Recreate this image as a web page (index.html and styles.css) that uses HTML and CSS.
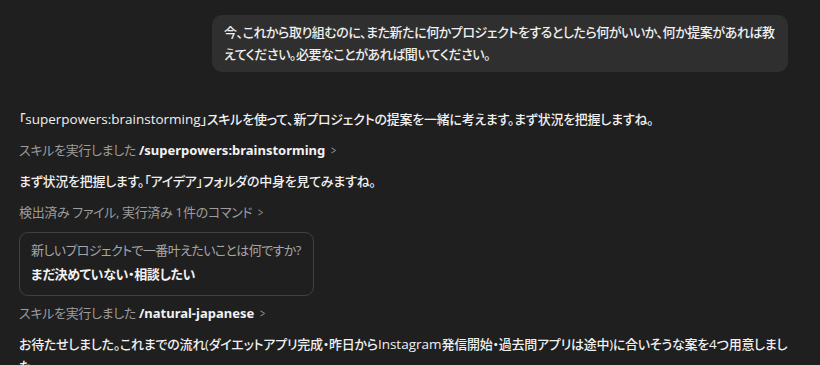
FILE: index.html
```html
<!DOCTYPE html>
<html lang="ja">
<head>
  <meta charset="UTF-8">
  <title>チャット</title>
  <link rel="stylesheet" href="styles.css">
</head>
<body>
  <div class="chat">
    <div class="user-row">
      <div class="bubble">今、これから取り組むのに、また新たに何かプロジェクトをするとしたら何がいいか、何か提案があれば教えてください。必要なことがあれば聞いてください。</div>
    </div>

    <div class="reply">
      <p class="msg">「<span class="en">superpowers:brainstorming</span>」スキルを使って、新プロジェクトの提案を一緒に考えます。まず状況を把握しますね。</p>
      <div class="tool">スキルを実行しました <span class="tool-name">/superpowers:brainstorming</span> <span class="chev">&gt;</span></div>
      <p class="msg">まず状況を把握します。「アイデア」フォルダの中身を見てみますね。</p>
      <div class="tool">検出済み ファイル, 実行済み <span class="en">1</span>件のコマンド <span class="chev">&gt;</span></div>
      <div class="question">
        <div class="q-text">新しいプロジェクトで一番叶えたいことは何ですか?</div>
        <div class="q-answer">まだ決めていない・相談したい</div>
      </div>
      <div class="tool tool-tight">スキルを実行しました <span class="tool-name">/natural-japanese</span> <span class="chev">&gt;</span></div>
      <p class="msg">お待たせしました。これまでの流れ(ダイエットアプリ完成・昨日から<span class="en">Instagram</span>発信開始・過去問アプリは途中)に合いそうな案を<span class="en">4</span>つ用意しました</p>
    </div>
  </div>
</body>
</html>
```

FILE: styles.css
```css
body {
  margin: 0;
  padding: 0;
  background: #1f1f1f;
  color: #ececec;
  font-family: "Open Sans", "Noto Sans CJK JP", sans-serif;
  font-size: 13px;
  font-weight: 500;
  line-height: 22px;
  letter-spacing: -0.25px;
  font-feature-settings: "palt";
  overflow: hidden;
}

.chat {
  display: flex;
  flex-direction: column;
  padding: 15px 0 0 19px;
}

.user-row {
  display: flex;
  justify-content: flex-end;
  padding-right: 32px;
}

.bubble {
  width: 552px;
  padding: 6px 12px 7px;
  background: #2f2f2f;
  border-radius: 10px;
  color: #f0f0f0;
  letter-spacing: -0.45px;
}

.reply {
  display: flex;
  flex-direction: column;
  align-items: flex-start;
  gap: 9px;
  margin-top: 36px;
  padding-right: 22px;
}

.msg {
  margin: 0;
  color: #f0f0f0;
}

.en {
  font-size: 13.5px;
  letter-spacing: 0;
}

.tool {
  color: #9c9c9c;
  font-weight: 400;
  letter-spacing: -0.35px;
}

.tool-name {
  color: #f2f2f2;
  font-family: "Noto Sans", "Noto Sans CJK JP", sans-serif;
  font-weight: 700;
  letter-spacing: 0;
}

.chev {
  display: inline-block;
  margin-left: 2px;
  color: #9c9c9c;
  transform: scaleX(0.7);
}

.question {
  display: flex;
  flex-direction: column;
  gap: 2px;
  padding: 6px 12px 10px 11px;
  border: 1px solid #414141;
  border-radius: 9px;
}

.q-text {
  color: #a6a6a6;
  font-weight: 400;
  letter-spacing: -0.6px;
}

.q-answer {
  color: #f2f2f2;
  font-weight: 700;
  letter-spacing: -0.35px;
}

.tool-tight {
  margin-top: -3px;
}
```
